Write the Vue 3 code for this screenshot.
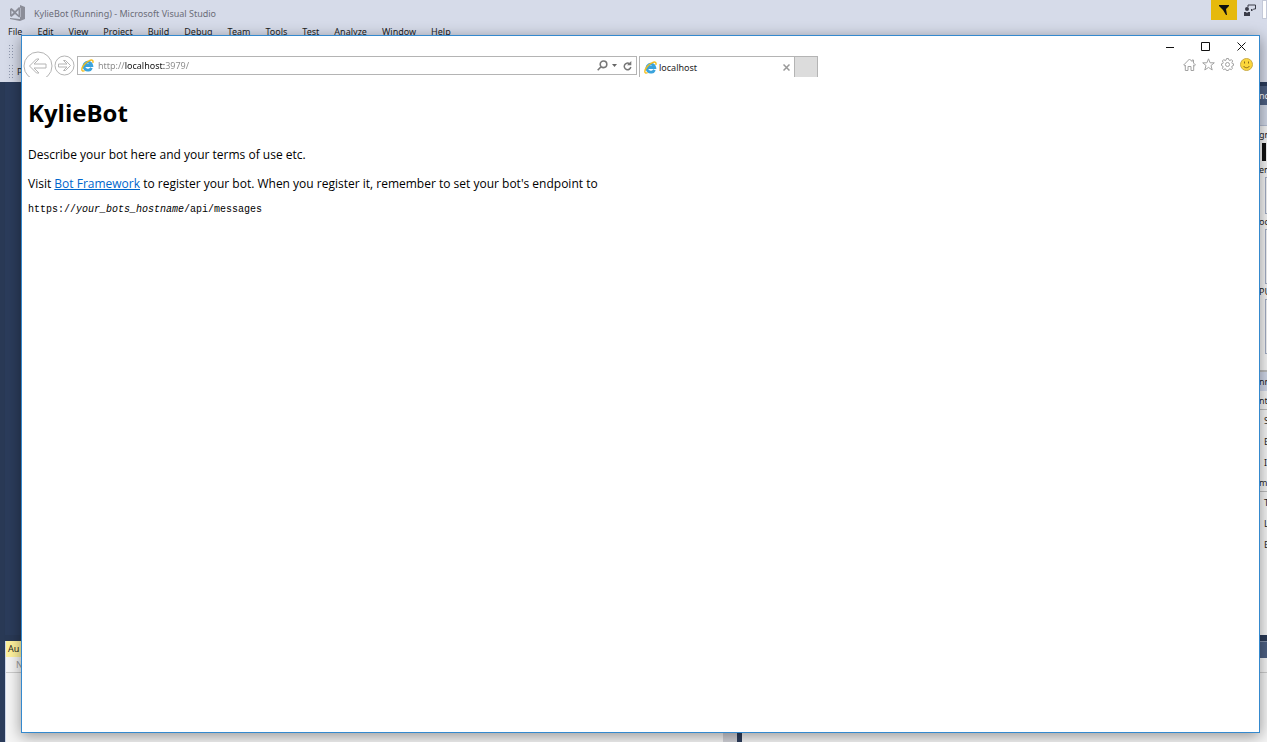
<template>
  <div class="desktop">
    <!-- Visual Studio -->
    <div class="ide">
      <header class="ide__header">
        <div class="ide__titlebar">
          <svg class="ide__logo" width="16" height="16" viewBox="0 0 16 16">
            <path fill="#8b8d98" fill-rule="evenodd" d="M11 0l5 2v12l-5 2-10-2v-1l10 1zM1 4l1.500-1L6 6l4-4 1.500 1v9L10 12.500 6 9l-3.500 3L1 11zM2.500 5.500v4L4.500 7.500zM9.500 5L7 7.500 9.500 10z" />
          </svg>
          <span class="ide__title">KylieBot (Running) - Microsoft Visual Studio</span>
          <button class="ide__filter" aria-label="Notifications">
            <svg width="12" height="12" viewBox="0 0 12 12">
              <path fill="#111" d="M1 1h10v1L8 5l1 6H8L5 6 1 2z" />
            </svg>
          </button>
          <button class="ide__feedback" aria-label="Feedback">
            <svg width="12" height="12" viewBox="0 0 12 12">
              <path fill="none" stroke="#3a3c48" d="M4 3V1h7.500v4H9.500L7.500 7V5" />
              <circle cx="3" cy="5" r="2" fill="#3a3c48" />
              <path fill="#3a3c48" d="M0 8h2l1 1 1-1h2v4H0z" />
            </svg>
          </button>
          <input class="ide__launch" type="text" aria-label="Quick Launch" />
        </div>
        <nav class="ide__menu">
          <button v-for="item in menu" :key="item" class="ide__menu-item">{{ item }}</button>
        </nav>
        <div class="ide__toolbar"><span class="ide__grip"></span></div>
        <div class="ide__toolbar"><span class="ide__grip"></span>P</div>
      </header>

      <div class="ide__body">
        <div class="ide__main"></div>
        <aside class="diag">
          <div class="diag__title">nd</div>
          <div class="diag__tools"></div>
          <div class="diag__label">gn</div>
          <div class="diag__timeline"></div>
          <div class="diag__label">en</div>
          <div class="diag__graph diag__graph--small"></div>
          <div class="diag__label">oc</div>
          <div class="diag__graph"></div>
          <div class="diag__label">PU</div>
          <div class="diag__graph"></div>
          <div class="diag__gap"></div>
          <div v-for="(row, i) in summary" :key="i" :class="['diag__row', { 'diag__row--head': row.head, 'diag__row--tab': row.tab, 'diag__row--item': row.item }]">
            {{ row.text }}
          </div>
        </aside>
      </div>

      <div class="ide__bottom">
        <section class="autos">
          <div class="autos__tab">Au</div>
          <div class="autos__columns">N</div>
          <div class="autos__scroll"></div>
        </section>
        <section class="output">
          <div class="output__title"></div>
          <div class="output__tools"></div>
        </section>
      </div>
    </div>

    <!-- Internet Explorer -->
    <div class="browser">
      <div class="browser__controls">
        <button class="browser__control" aria-label="Minimize">
          <svg width="9" height="9" viewBox="0 0 9 9"><path stroke="#111" d="M1 5.500h8" /></svg>
        </button>
        <button class="browser__control" aria-label="Maximize">
          <svg width="9" height="9" viewBox="0 0 9 9"><path fill="none" stroke="#111" d="M.5.500h8v8h-8z" /></svg>
        </button>
        <button class="browser__control" aria-label="Close">
          <svg width="9" height="9" viewBox="0 0 9 9"><path stroke="#111" d="M.5.500l8 8M8.500.500l-8 8" /></svg>
        </button>
      </div>

      <div class="browser__bar">
        <button class="browser__back" aria-label="Back">
          <svg width="30" height="30" viewBox="0 0 30 30" fill="none" stroke="#b4b4b4">
            <circle cx="15" cy="15" r="14" />
            <path d="M6.500 15l7-7h2.500l-5 5h12v4h-12l5 5h-2.500z" />
          </svg>
        </button>
        <button class="browser__forward" aria-label="Forward">
          <svg width="21" height="21" viewBox="0 0 21 21" fill="none" stroke="#b4b4b4">
            <circle cx="10.500" cy="10.500" r="9.500" />
            <path d="M16.500 10.500l-5 5h-2l3.500-3.500H4.500V9H13L9.500 5.500h2z" />
          </svg>
        </button>

        <form class="address" @submit.prevent>
          <svg class="ie" width="13" height="13" viewBox="0 0 14 14">
            <path fill="none" stroke="#3ba3dc" stroke-width="3" d="M11.300 9.500A4.300 4.300 0 1 1 11.600 7H4.200" />
            <path fill="none" stroke="#f3bd1d" stroke-width="1.500" d="M12.700 4.200C13.600 1.500 12 .3 9 1.800 5 3.600 1.200 8 .9 11c-.2 2 1 2.500 3 1.600" />
          </svg>
          <input v-model="url" class="address__input" type="text" aria-label="Address" />
          <button type="button" class="address__btn" aria-label="Search">
            <svg width="11" height="11" viewBox="0 0 11 11" fill="none" stroke="#777" stroke-width="1.600">
              <circle cx="6.500" cy="4.300" r="3.300" />
              <path d="M4 6.800L.7 10.200" />
            </svg>
          </button>
          <button type="button" class="address__btn" aria-label="Show address list">
            <svg width="5" height="3" viewBox="0 0 5 3"><path fill="#666" d="M0 0h5L2.500 3z" /></svg>
          </button>
          <button type="submit" class="address__btn" aria-label="Refresh">
            <svg width="9" height="10" viewBox="0 0 9 10">
              <path fill="none" stroke="#777" stroke-width="1.500" d="M6.500 2.700A3.300 3.300 0 1 0 7.800 6" />
              <path fill="#777" d="M8.300 0v4.300H4z" />
            </svg>
          </button>
        </form>

        <div class="tab">
          <svg class="ie" width="13" height="13" viewBox="0 0 14 14">
            <path fill="none" stroke="#3ba3dc" stroke-width="3" d="M11.300 9.500A4.300 4.300 0 1 1 11.600 7H4.200" />
            <path fill="none" stroke="#f3bd1d" stroke-width="1.500" d="M12.700 4.200C13.600 1.500 12 .3 9 1.800 5 3.600 1.200 8 .9 11c-.2 2 1 2.500 3 1.600" />
          </svg>
          <span class="tab__title">localhost</span>
          <button class="tab__close" aria-label="Close tab">
            <svg width="7" height="7" viewBox="0 0 7 7"><path stroke="#999" stroke-width="1.500" d="M.5.500l6 6M6.500.500l-6 6" /></svg>
          </button>
        </div>
        <button class="browser__newtab" aria-label="New tab"></button>

        <div class="browser__tools">
          <button class="browser__tool" aria-label="Home">
            <svg width="13" height="13" viewBox="0 0 13 13" fill="none" stroke="#a2a2a2">
              <path d="M.7 7L6.500 1l2.500 2.500V2h1.500v3l2 2-.8.800-1-.8v5.500H8v-4H5v4H2.300V7l-.8.800z" />
            </svg>
          </button>
          <button class="browser__tool" aria-label="Favorites">
            <svg width="13" height="13" viewBox="0 0 13 13" fill="none" stroke="#a2a2a2">
              <path d="M6.500.800l1.600 4h4.200L9 7.500l1.200 4.500-3.700-2.600L2.800 12 4 7.500.7 4.800h4.200z" />
            </svg>
          </button>
          <button class="browser__tool" aria-label="Settings">
            <svg width="13" height="13" viewBox="0 0 13 13" fill="none" stroke="#a2a2a2">
              <path d="M5.500.500h2l.4 1.600 1 .4 1.500-.9 1.300 1.400-.8 1.400.3 1.100 1.300.3v1.700l-1.400.5-.4 1 .8 1.400-1.300 1.200-1.400-.7-.9.400-.5 1.200h-2L5 11.300 4 10.900l-1.400.7-1.200-1.200.7-1.400-.4-1L.5 7.500V5.800L1.800 5.500l.4-1.100L1.400 3l1.300-1.400 1.400.9 1-.4z" />
              <circle cx="6.500" cy="6.500" r="2" />
            </svg>
          </button>
          <button class="browser__tool" aria-label="Send a smile">
            <svg width="13" height="13" viewBox="0 0 13 13">
              <circle cx="6.500" cy="6.500" r="6" fill="#fbd63b" stroke="#c9ab4a" />
              <path fill="none" stroke="#8a6a1a" d="M3.500 8c1.500 2.300 4.500 2.300 6 0M4.500 3.500v2M8.500 3.500v2" />
            </svg>
          </button>
        </div>
      </div>

      <main class="page">
        <h1 class="page__title">KylieBot</h1>
        <p class="page__text">Describe your bot here and your terms of use etc.</p>
        <p class="page__text">
          Visit <a class="page__link" href="#">Bot Framework</a> to register your bot. When you register it, remember to set your bot's endpoint to
        </p>
        <pre class="page__code">https://<i>your_bots_hostname</i>/api/messages</pre>
      </main>
    </div>
  </div>
</template>

<script setup>
import { ref } from 'vue'

const url = ref('http://localhost:3979/')

const menu = [
  'File', 'Edit', 'View', 'Project', 'Build', 'Debug',
  'Team', 'Tools', 'Test', 'Analyze', 'Window', 'Help'
]

const summary = [
  { text: 'nn', tab: true },
  { text: 'nt', head: true },
  { text: 'S', item: true },
  { text: 'E', item: true },
  { text: 'I', item: true },
  { text: 'm', head: true },
  { text: 'T', item: true },
  { text: 'L', item: true },
  { text: 'E', item: true }
]
</script>

<style>
body {
  margin: 0;
  overflow: hidden;
}
</style>

<style scoped>
.desktop {
  position: relative;
  height: 100vh;
  overflow: hidden;
  font-family: "Noto Sans", "Open Sans", sans-serif;
  font-size: 9px;
  color: #1e1e1e;
}
button {
  display: flex;
  align-items: center;
  justify-content: center;
  padding: 0;
  border: none;
  background: none;
  color: inherit;
  font: inherit;
}
svg { display: block; flex: none; }

/* Visual Studio */
.ide {
  display: flex;
  flex-direction: column;
  height: 100%;
  background: #2b3c5b;
}
.ide__header {
  flex: none;
  height: 82px;
  background: #d6dbe9;
}
.ide__titlebar {
  display: flex;
  align-items: flex-start;
  height: 25px;
  padding-left: 9px;
}
.ide__logo { margin-top: 5px; }
.ide__title {
  flex: 1;
  margin-left: 9px;
  line-height: 28px;
  color: #6b6d78;
}
.ide__filter {
  width: 26px;
  height: 20px;
  background: #e6b90c;
}
.ide__feedback {
  width: 25px;
  height: 20px;
}
.ide__launch {
  box-sizing: border-box;
  width: 5px;
  height: 19px;
  padding: 0;
  border: 1px solid #c4c9d8;
  background: #fff;
}
.ide__menu {
  display: flex;
  gap: 15px;
  height: 16px;
  padding-left: 8px;
}
.ide__menu-item { line-height: 14px; align-items: flex-start; }
.ide__toolbar {
  display: flex;
  align-items: center;
  gap: 4px;
  height: 20px;
  padding-left: 8px;
}
.ide__grip {
  width: 5px;
  height: 14px;
  background: radial-gradient(#8f97ad 1px, transparent 1px) 0 0 / 3px 3px;
}
.ide__body {
  display: flex;
  flex: 1;
  min-height: 0;
  border-left: 5px solid #293955;
  border-bottom: 6px solid #293955;
}
.ide__main { flex: 1; }

/* Diagnostic tools */
.diag {
  width: 8px;
  margin-top: 4px;
  background: #f5f5f5;
  white-space: nowrap;
}
.diag__title {
  height: 19px;
  line-height: 19px;
  background: #4d6082;
  color: #fff;
}
.diag__tools {
  height: 20px;
  margin-bottom: 2px;
  background: #cfd6e5;
  border-bottom: 1px solid #b4bccf;
}
.diag__label { height: 14px; line-height: 14px; }
.diag__timeline {
  width: 4px;
  height: 18px;
  margin: 1px 0 2px 3px;
  background: #111;
}
.diag__graph {
  box-sizing: border-box;
  height: 55px;
  margin: 0 0 1px 6px;
  border: 1px solid #a3adc4;
  border-right: none;
}
.diag__graph--small { height: 37px; }
.diag__gap {
  height: 15px;
  border-bottom: 2px solid #bbb;
}
.diag__row {
  height: 19px;
  line-height: 19px;
}
.diag__row--tab { background: #d0d7e8; }
.diag__row--head {
  box-sizing: border-box;
  border-bottom: 1px solid #bbb;
}
.diag__row--item {
  height: 21px;
  line-height: 21px;
  padding-left: 5px;
}

/* Bottom panels */
.ide__bottom {
  display: flex;
  flex: none;
  gap: 5px;
  height: 101px;
  padding-left: 5px;
}
.autos {
  display: grid;
  grid-template-rows: 16px 16px 1fr;
  flex: 732;
  background: #f5f5f5;
  border-left: 1px solid #ccd5e8;
}
.autos__tab {
  padding-left: 2px;
  line-height: 16px;
  background: #fff29d;
}
.autos__columns {
  padding-left: 10px;
  line-height: 15px;
  color: #999;
  border-bottom: 1px solid #ccc;
}
.autos__scroll {
  width: 14px;
  justify-self: end;
  background: #d0d1d7;
}
.output {
  flex: 526;
  background: #f5f5f5;
}
.output__title {
  height: 16px;
  background: #4d6082;
  border-top: 1px solid #8592ab;
}
.output__tools {
  height: 14px;
  border-bottom: 1px solid #ccc;
}

/* Internet Explorer */
.browser {
  position: absolute;
  top: 35px;
  right: 7px;
  bottom: 9px;
  left: 21px;
  display: flex;
  flex-direction: column;
  background: #fff;
  border: 1px solid #3489ce;
  box-shadow: 0 3px 14px rgba(0, 0, 0, 0.4);
}
.browser__controls {
  display: flex;
  align-items: flex-end;
  justify-content: flex-end;
  gap: 27px;
  height: 15px;
  padding-right: 13px;
}
.browser__bar {
  display: flex;
  align-items: flex-start;
  height: 26px;
  padding: 0 6px 0 1px;
  overflow: hidden;
}
.browser__forward { margin: 4px 2px 0 1px; }
.address {
  display: flex;
  align-items: center;
  flex: 0 1 560px;
  box-sizing: border-box;
  height: 19px;
  margin-top: 5px;
  padding: 0 4px 0 3px;
  gap: 4px;
  border: 1px solid #b4b4b4;
}
.address__input {
  flex: 1;
  min-width: 0;
  padding: 0;
  border: none;
  outline: none;
  font: inherit;
  /* host part darker than the scheme and port */
  background: linear-gradient(90deg, #888 27px, #111 27px, #111 67px, #888 67px);
  background-clip: text;
  -webkit-background-clip: text;
  color: transparent;
  caret-color: #111;
}
.address__btn { height: 17px; }
.address__btn:last-child { margin-left: 2px; }
.tab {
  display: flex;
  align-items: center;
  flex: 0 1 156px;
  box-sizing: border-box;
  height: 21px;
  margin: 5px 0 0 2px;
  padding: 0 4px;
  border: 1px solid #b4b4b4;
  border-bottom: none;
}
.tab__title { flex: 1; margin-left: 2px; }
.browser__newtab {
  box-sizing: border-box;
  width: 23px;
  height: 21px;
  margin-top: 5px;
  background: #dcdcdc;
  border: 1px solid #b4b4b4;
  border-width: 1px 1px 0 0;
}
.browser__tools {
  display: flex;
  gap: 6px;
  margin: 7px 0 0 auto;
}

/* Page */
.page {
  flex: 1;
  padding: 0 6px;
  font-family: "Open Sans", "Noto Sans", sans-serif;
  font-size: 12px;
  line-height: 17px;
  color: #000;
}
.page__title {
  margin: 19px 0 16px;
  font-size: 24px;
  line-height: 34px;
}
.page__text { margin: 0 0 12px; }
.page__link { color: #0066cc; }
.page__code {
  margin: 0;
  font-family: "Liberation Mono", monospace;
  font-size: 10px;
  line-height: 12px;
}
</style>
